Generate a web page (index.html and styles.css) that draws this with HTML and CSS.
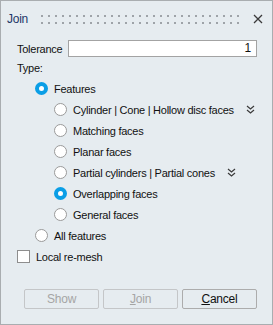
FILE: index.html
```html
<!DOCTYPE html>
<html lang="en">
<head>
  <meta charset="UTF-8" />
  <title>Join</title>
  <link rel="stylesheet" href="styles.css">
</head>
<body>
  <div class="dialog">
    <div class="titlebar">
      <span class="title">Join</span>
      <svg class="grip" width="203" height="10">
        <defs>
          <pattern id="dots" width="7" height="7" patternUnits="userSpaceOnUse">
            <rect x="0" y="0" width="2" height="2" fill="#9ea3a8" />
          </pattern>
        </defs>
        <rect x="0" y="0" width="203" height="9" fill="url(#dots)" />
      </svg>
      <svg class="close" width="10" height="10" viewBox="0 0 10 10">
        <path d="M1 1 L9 9 M9 1 L1 9" stroke="#3a3a3a" stroke-width="1.3" />
      </svg>
    </div>

    <div class="form">
      <div class="field">
        <label>Tolerance</label>
        <div class="input">1</div>
      </div>

      <div class="row">Type:</div>

      <div class="row level1"><span class="radio on"></span><span>Features</span></div>
      <div class="row level2"><span class="radio"></span><span>Cylinder | Cone | Hollow disc faces</span>
        <svg class="more" width="9" height="9" viewBox="0 0 9 9"><path d="M1 1 L4.5 4 L8 1 M1 5 L4.5 8 L8 5" fill="none" stroke="#3a3a3a" stroke-width="1.2" /></svg>
      </div>
      <div class="row level2"><span class="radio"></span><span>Matching faces</span></div>
      <div class="row level2"><span class="radio"></span><span>Planar faces</span></div>
      <div class="row level2"><span class="radio"></span><span>Partial cylinders | Partial cones</span>
        <svg class="more" width="9" height="9" viewBox="0 0 9 9"><path d="M1 1 L4.5 4 L8 1 M1 5 L4.5 8 L8 5" fill="none" stroke="#3a3a3a" stroke-width="1.2" /></svg>
      </div>
      <div class="row level2"><span class="radio on"></span><span>Overlapping faces</span></div>
      <div class="row level2"><span class="radio"></span><span>General faces</span></div>
      <div class="row level1"><span class="radio"></span><span>All features</span></div>

      <div class="row"><span class="checkbox"></span><span>Local re-mesh</span></div>
    </div>

    <div class="buttons">
      <button class="btn" disabled>Show</button>
      <button class="btn" disabled><u>J</u>oin</button>
      <button class="btn"><u>C</u>ancel</button>
    </div>
  </div>
</body>
</html>
```

FILE: styles.css
```css
body {
  margin: 0;
  font-family: "Liberation Sans", Arial, sans-serif;
  font-size: 11px;
  letter-spacing: -0.25px;
  color: #111;
}

.dialog {
  width: 273px;
  height: 325px;
  box-sizing: border-box;
  border: 1px solid #a9adb0;
  background: #e6ecf0;
  display: flex;
  flex-direction: column;
}

.titlebar {
  height: 35px;
  display: flex;
  align-items: center;
  padding-left: 6px;
}
.title {
  color: #1d3768;
  font-size: 12px;
  width: 34px;
}
.grip {
  margin-top: 2px;
}
.close {
  margin-left: 9px;
}

.form {
  padding: 4px 15px 0 16px;
}

.field {
  display: flex;
  align-items: center;
  height: 17px;
}
.field label {
  width: 51px;
}
.input {
  flex: 1;
  height: 17px;
  box-sizing: border-box;
  border: 1px solid #a3a3a3;
  background: #fff;
  text-align: right;
  padding-right: 5px;
  line-height: 15px;
  font-size: 12px;
}

.row {
  height: 21px;
  display: flex;
  align-items: center;
  white-space: nowrap;
}
.level1 { padding-left: 18px; }
.level2 { padding-left: 37px; }

.radio {
  width: 13px;
  height: 13px;
  box-sizing: border-box;
  border-radius: 50%;
  border: 1px solid #9a9a9a;
  background: #fff;
  margin-right: 6px;
  flex: none;
}
.radio.on {
  border: 4px solid #0a9ee6;
}

.more {
  margin-left: 12px;
  flex: none;
}

.checkbox {
  width: 13px;
  height: 13px;
  box-sizing: border-box;
  border: 1px solid #8e8e8e;
  background: #fff;
  margin-right: 6px;
  flex: none;
}

.buttons {
  display: flex;
  justify-content: flex-end;
  gap: 4px;
  padding: 22px 15px 0 0;
}
.btn {
  width: 75px;
  height: 20px;
  font-family: inherit;
  font-size: 12px;
  letter-spacing: -0.2px;
  color: #111;
  background: #e6ecf0;
  border: 1px solid #acacac;
  border-radius: 2px;
  padding: 0;
}
.btn:disabled {
  color: #a5a5a5;
  border-color: #c4c6c8;
}
```
